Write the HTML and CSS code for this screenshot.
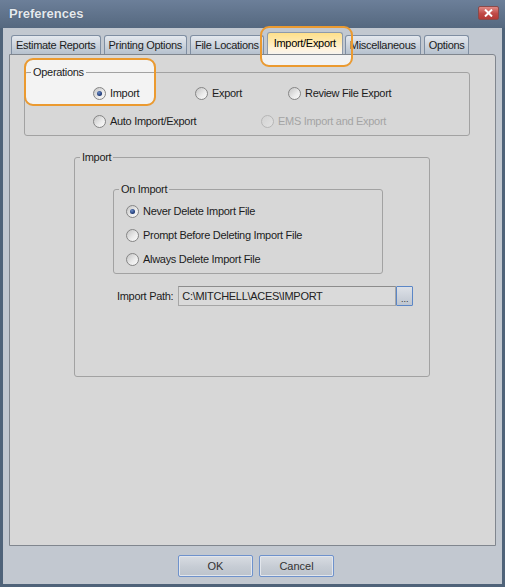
FILE: index.html
```html
<!DOCTYPE html>
<html lang="en">
<head>
  <meta charset="UTF-8">
  <title>Preferences</title>
  <link rel="stylesheet" href="styles.css">
</head>
<body>
  <div class="window">
    <div class="titlebar">
      <span class="title">Preferences</span>
      <span class="close">
        <svg width="9" height="8" viewBox="0 0 9 8"><path d="M1 0.5 L8 7.5 M8 0.5 L1 7.5" stroke="#fff" stroke-width="2"/></svg>
      </span>
    </div>

    <div class="tabs">
      <div class="tab">Estimate Reports</div>
      <div class="tab">Printing Options</div>
      <div class="tab">File Locations</div>
      <div class="tab active">Import/Export</div>
      <div class="tab">Miscellaneous</div>
      <div class="tab">Options</div>
    </div>

    <div class="panel">
      <fieldset class="group ops">
        <legend>Operations</legend>
        <div class="ops-grid">
          <label class="radio checked"><span class="radio-box"></span>Import</label>
          <label class="radio col2"><span class="radio-box"></span>Export</label>
          <label class="radio col4"><span class="radio-box"></span>Review File Export</label>
          <label class="radio span12"><span class="radio-box"></span>Auto Import/Export</label>
          <label class="radio disabled span34"><span class="radio-box"></span>EMS Import and Export</label>
        </div>
      </fieldset>

      <fieldset class="group import">
        <legend>Import</legend>
        <fieldset class="group on-import">
          <legend>On Import</legend>
          <div class="radio-list">
            <label class="radio checked"><span class="radio-box"></span>Never Delete Import File</label>
            <label class="radio"><span class="radio-box"></span>Prompt Before Deleting Import File</label>
            <label class="radio"><span class="radio-box"></span>Always Delete Import File</label>
          </div>
        </fieldset>
        <div class="path-row">
          <span class="path-label">Import Path:</span>
          <div class="path-input">C:\MITCHELL\ACES\IMPORT</div>
          <button class="browse">...</button>
        </div>
      </fieldset>
    </div>

    <div class="actions">
      <button class="btn">OK</button>
      <button class="btn">Cancel</button>
    </div>

    <!-- orange annotation highlights -->
    <div class="hl-fill hl-tab"></div>
    <div class="hl-ring hl-tab"></div>
    <div class="hl-fill hl-ops"></div>
    <div class="hl-ring hl-ops"></div>
  </div>
</body>
</html>
```

FILE: styles.css
```css
body {
  margin: 0;
  font-family: "Liberation Sans", Arial, sans-serif;
  font-size: 11px;
  letter-spacing: -0.3px;
  color: #1c1c1c;
  background: #c2c8d0;
}
.window {
  position: relative;
  width: 505px;
  height: 587px;
  box-sizing: border-box;
  border: 3px solid #4f6379;
  border-top: 0;
  background: #c2c8d0;
}
.titlebar {
  display: flex;
  align-items: flex-start;
  justify-content: space-between;
  height: 28px;
  margin: 0 -3px;
  padding: 0 6px 0 9px;
  background: linear-gradient(#6c7f99, #55687f);
}
.title {
  font-size: 13px;
  font-weight: bold;
  letter-spacing: 0;
  line-height: 28px;
  color: #e4e9ef;
  text-shadow: 0 0 1px #3c4a5c;
}
.close {
  display: flex;
  align-items: center;
  justify-content: center;
  width: 21px;
  height: 14px;
  margin-top: 6px;
  box-sizing: border-box;
  border: 1px solid #8a4a4a;
  border-radius: 2px;
  background: linear-gradient(#e08a86, #c04a46 55%, #b43a36);
}

/* tabs */
.tabs {
  position: relative;
  z-index: 1;
  display: flex;
  align-items: flex-end;
  gap: 3px;
  height: 22px;
  margin: 5px 0 -1px;
  padding-left: 8px;
}
.tab {
  height: 19px;
  margin-bottom: 1px;
  padding: 0 4px;
  box-sizing: border-box;
  border: 1px solid #7f8ea2;
  border-bottom: 0;
  border-radius: 3px 3px 0 0;
  background: linear-gradient(#e4e8ee, #c8d0da 60%, #b6c1ce);
  line-height: 18px;
  white-space: nowrap;
}
.tab.active {
  height: 22px;
  margin-right: -1px;
  padding: 0 6px;
  border-color: #8e9aaa;
  background: linear-gradient(#ffe08a, #ffeab4 45%, #fff4e0 80%, #f6f3ee);
  line-height: 20px;
  color: #000;
}

/* main panel */
.panel {
  height: 492px;
  margin: 0 6px;
  box-sizing: border-box;
  border: 1px solid #80868e;
  border-radius: 0 3px 0 0;
  background: #d7d7d7;
  padding: 11px 0 0 14px;
}
.group {
  position: relative;
  z-index: 1;
  margin: 0;
  min-inline-size: 0;
  border: 1px solid #a2a2a2;
  border-radius: 3px;
}
.group legend {
  padding: 0 2px;
  line-height: 13px;
}
.ops {
  width: 446px;
  box-sizing: border-box;
  padding: 6px 0 6px 6px;
}
.ops-grid {
  display: grid;
  grid-template-columns: 102px 66px 27px 1fr;
  row-gap: 12px;
  margin-left: 62px;
}
.col2 { grid-column: 2; }
.col4 { grid-column: 4; }
.span12 { grid-column: 1 / span 2; }
.span34 { grid-column: 3 / span 2; }

.radio {
  display: flex;
  align-items: center;
  gap: 4px;
  height: 16px;
  white-space: nowrap;
}
.radio-box {
  position: relative;
  width: 13px;
  height: 13px;
  flex: none;
  box-sizing: border-box;
  border: 1px solid #858585;
  border-radius: 50%;
  background: linear-gradient(135deg, #c4c4c4, #ececec 60%, #fafafa);
}
.radio.checked .radio-box::after {
  content: "";
  position: absolute;
  inset: 3px;
  border-radius: 50%;
  background: radial-gradient(circle at 40% 35%, #6a8cc8, #1a3470 70%);
}
.radio.disabled {
  color: #a4a4a4;
}
.radio.disabled .radio-box {
  border-color: #b6b6b6;
  background: linear-gradient(135deg, #d2d2d2, #e2e2e2);
}

.import {
  width: 356px;
  box-sizing: border-box;
  margin: 15px 0 0 50px;
  padding: 19px 0 70px 5px;
}
.on-import {
  width: 270px;
  box-sizing: border-box;
  margin-left: 33px;
  padding: 7px 0 6px 5px;
}
.radio-list {
  display: flex;
  flex-direction: column;
  gap: 8px;
  margin-left: 7px;
}
.path-row {
  display: flex;
  align-items: center;
  height: 20px;
  margin: 12px 0 0 37px;
}
.path-label {
  margin-right: 5px;
}
.path-input {
  width: 218px;
  height: 20px;
  box-sizing: border-box;
  border: 1px solid #a6a6a6;
  border-top-color: #8c8c8c;
  background: #dadada;
  padding-left: 3px;
  line-height: 18px;
  color: #222;
}
.browse {
  width: 17px;
  height: 20px;
  padding: 0;
  box-sizing: border-box;
  border: 1px solid #5b86c6;
  border-radius: 1px;
  background: linear-gradient(#dde1e7, #bfc6d0);
  font: 9px "Liberation Sans", Arial, sans-serif;
  color: #333;
  line-height: 24px;
}

/* bottom buttons */
.actions {
  display: flex;
  justify-content: center;
  gap: 6px;
  margin-top: 9px;
  padding-left: 7px;
}
.btn {
  width: 75px;
  height: 22px;
  box-sizing: border-box;
  border: 1px solid #6e92cc;
  border-radius: 2px;
  box-shadow: inset 0 0 0 1px #e2e6ec;
  background: linear-gradient(#d8dce2, #c6ccd4 55%, #bcc3cc);
  font: 11px "Liberation Sans", Arial, sans-serif;
  color: #333;
}

/* annotation highlights */
.hl-fill,
.hl-ring {
  position: absolute;
  box-sizing: border-box;
  border-radius: 9px;
}
.hl-fill {
  z-index: 0;
  border: 2px solid transparent;
}
.hl-ring {
  z-index: 3;
  border: 2px solid #eb9a30;
  pointer-events: none;
}
.hl-tab {
  left: 257px;
  top: 26px;
  width: 93px;
  height: 41px;
}
.hl-fill.hl-tab {
  background: linear-gradient(transparent 27px, #f3f3f3 27px);
  background-clip: padding-box;
}
.hl-ops {
  left: 21px;
  top: 58px;
  width: 132px;
  height: 48px;
}
.hl-fill.hl-ops {
  background: #f3f3f3;
  background-clip: padding-box;
}
```
